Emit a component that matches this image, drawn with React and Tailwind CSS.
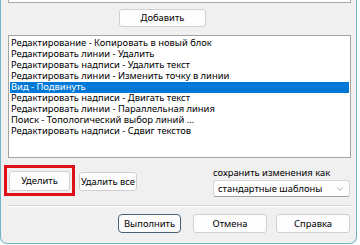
import { ChevronDown } from "lucide-react";

const items = [
  "Редактирование - Копировать в новый блок",
  "Редактировать линии - Удалить",
  "Редактировать надписи - Удалить текст",
  "Редактировать линии - Изменить точку в линии",
  "Вид - Подвинуть",
  "Редактировать надписи - Двигать текст",
  "Редактировать линии - Параллельная линия",
  "Поиск - Топологический выбор линий ...",
  "Редактировать надписи - Сдвиг текстов",
];

const btn =
  "flex items-center justify-center whitespace-nowrap rounded-[3px] border border-[#d0d0d0] bg-[#fdfdfd] text-black";

export default function App() {
  return (
    <div
      className="w-[360px] h-[245px] bg-white text-[9.4px] leading-none"
      style={{ fontFamily: '"Noto Sans", "Open Sans", sans-serif' }}
    >
      <div className="w-[357px] h-[244px] flex flex-col pl-[7px] pr-[5px] bg-[#f0f0f0] border-x border-b border-[#6cb6c7] rounded-b-[7px] overflow-hidden">
        {/* bottom edge of the list above */}
        <div className="h-[3px] shrink-0 bg-white border-x border-b border-[#a9a9a9]" />

        <button className={`${btn} mt-[6px] ml-[111px] w-[87px] h-[18px] shrink-0`}>
          Добавить
        </button>

        <div className="mt-[8px] h-[123px] shrink-0 bg-white border border-[#a3a3a3] p-px pt-[1.5px]">
          {items.map((item, i) => (
            <div
              key={item}
              className={`h-[11px] flex items-center pl-px whitespace-nowrap ${
                i === 4 ? "bg-[#0078d7] text-white" : "text-black"
              }`}
            >
              {item}
            </div>
          ))}
        </div>

        <div className="mt-[9px] h-[30px] shrink-0 flex">
          <div className="relative ml-px mt-[4px]">
            <button className={`${btn} w-[61px] h-[20px]`}>Уделить</button>
            <div className="absolute -left-[5px] -top-[6px] w-[71px] h-[31px] border-[3px] border-[#e01019]" />
          </div>
          <button className={`${btn} ml-[9px] mt-[5px] w-[58px] h-[19px]`}>
            Удалить все
          </button>
          <div className="ml-[76px] flex flex-col">
            <div className="h-[12px] flex items-center text-black whitespace-nowrap">
              сохранить изменения как
            </div>
            <div className="mt-[2px] w-[137px] h-[18px] flex items-center justify-between pl-[4px] pr-[4px] rounded-[3px] border border-[#d5d5d5] border-b-[#a0a0a0] bg-[#fdfdfd] text-black">
              <span className="whitespace-nowrap">стандартные шаблоны</span>
              <ChevronDown size={10} strokeWidth={1.5} className="text-[#777]" />
            </div>
          </div>
        </div>

        <div className="mt-[8px] shrink-0 border-t border-[#d3d3d3] border-b border-b-white" />

        <div className="mt-[7px] flex">
          <button className={`${btn} ml-[110px] w-[63px] h-[19px] !border-[#46627a] rounded-[4px]`}>
            Выполнить
          </button>
          <button className={`${btn} ml-[12px] w-[74px] h-[19px]`}>Отмена</button>
          <button className={`${btn} ml-[9px] w-[74px] h-[19px]`}>Справка</button>
        </div>
      </div>
    </div>
  );
}
